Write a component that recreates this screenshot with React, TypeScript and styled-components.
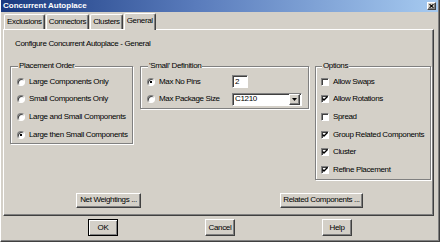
import React from 'react';
import styled, { createGlobalStyle, css } from 'styled-components';

const GlobalStyle = createGlobalStyle`
  html, body { margin: 0; padding: 0; background: #d4d0c8; }
  body { font-family: "Liberation Sans", Arial, sans-serif; font-size: 8px; color: #000; }
  * { box-sizing: border-box; }
`;

const raised = css`
  border: 1px solid;
  border-color: #fff #404040 #404040 #fff;
  box-shadow: inset -1px -1px 0 #808080;
`;

const sunken = css`
  border: 1px solid;
  border-color: #808080 #fff #fff #808080;
  box-shadow: inset 1px 1px 0 #404040;
  background: #fff;
`;

const Dialog = styled.div`
  width: 440px;
  height: 242px;
  background: #d4d0c8;
  border-left: 1px solid #fff;
  border-right: 1px solid #404040;
  border-bottom: 1px solid #404040;
  box-shadow: inset -1px -1px 0 #808080;
  display: flex;
  flex-direction: column;
  letter-spacing: -0.35px;
  line-height: 10px;
`;

const TitleBar = styled.div`
  height: 12px;
  margin-right: 1px;
  display: flex;
  align-items: center;
  padding: 0 2px 0 2px;
  background: linear-gradient(90deg, #1a3a80 0%, #5a7cbc 45%, #a6caf0 100%);
`;

const Title = styled.span`
  flex: 1;
  color: #fff;
  font-weight: bold;
  letter-spacing: 0;
`;

const CloseButton = styled.div`
  ${raised};
  width: 9px;
  height: 8px;
  background: #d4d0c8;
  display: flex;
  align-items: center;
  justify-content: center;
`;

const TabStrip = styled.div`
  height: 16px;
  margin-top: 1px;
  padding-left: 3px;
  display: flex;
  align-items: flex-end;
  gap: 1px;
  position: relative;
  z-index: 1;
`;

const Tab = styled.div<{ $active?: boolean }>`
  height: ${(p) => (p.$active ? '17px' : '15px')};
  margin-bottom: ${(p) => (p.$active ? '-1px' : '0')};
  padding: 0 2px;
  display: flex;
  align-items: center;
  background: #d4d0c8;
  border-top: 1px solid #fff;
  border-left: 1px solid #fff;
  border-right: 1px solid #404040;
  border-radius: 2px 2px 0 0;
  box-shadow: inset -1px 0 0 #808080;
  padding-bottom: ${(p) => (p.$active ? '2px' : '0')};
`;

const Panel = styled.div`
  ${raised};
  margin-left: 2px;
  width: 431px;
  height: 187px;
  padding: 9px 0 0 6px;
  display: flex;
  flex-direction: column;
`;

const Heading = styled.div`
  margin-left: 5px;
  height: 10px;
`;

const GroupsRow = styled.div`
  margin-top: 12px;
  display: flex;
  align-items: flex-start;
`;

const Group = styled.fieldset<{ $width: number; $gapLeft?: number; $padLeft?: number }>`
  width: ${(p) => p.$width}px;
  margin: 0 0 0 ${(p) => p.$gapLeft ?? 0}px;
  padding: 2px 0 0 ${(p) => p.$padLeft ?? 6}px;
  min-width: 0;
  border: 1px solid #808080;
  box-shadow: inset 1px 1px 0 #fff, 1px 1px 0 #fff;
`;

const Legend = styled.legend`
  padding: 0 1px;
  margin-left: 1px;
  height: 10px;
  line-height: 10px;
  background: #d4d0c8;
`;

const Row = styled.div`
  height: 17.6px;
  display: flex;
  align-items: center;
`;

const Choice = styled.label<{ $width?: number }>`
  display: flex;
  align-items: center;
  gap: 4px;
  ${(p) => p.$width && `width: ${p.$width}px;`}
`;

const Radio = styled.span<{ $checked?: boolean }>`
  ${sunken};
  width: 8px;
  height: 8px;
  border-radius: 50%;
  flex: none;
  display: flex;
  align-items: center;
  justify-content: center;
  &::after {
    content: '';
    width: 2px;
    height: 2px;
    background: ${(p) => (p.$checked ? '#000' : 'transparent')};
  }
`;

const Check = styled.span`
  ${sunken};
  width: 8px;
  height: 8px;
  flex: none;
  display: flex;
  align-items: center;
  justify-content: center;
`;

const TextBox = styled.div<{ $width: number }>`
  ${sunken};
  width: ${(p) => p.$width}px;
  height: 13px;
  padding-left: 2px;
  display: flex;
  align-items: center;
`;

const ComboBox = styled(TextBox)`
  padding-right: 1px;
  justify-content: space-between;
`;

const ComboArrow = styled.div`
  ${raised};
  width: 11px;
  height: 11px;
  background: #d4d0c8;
  display: flex;
  align-items: center;
  justify-content: center;
`;

const Button = styled.button<{ $width: number; $default?: boolean }>`
  ${raised};
  width: ${(p) => p.$width}px;
  height: 15px;
  padding: 0;
  background: #d4d0c8;
  font: inherit;
  letter-spacing: inherit;
  color: #000;
  ${(p) =>
    p.$default &&
    css`
      outline: 1px solid #000;
      outline-offset: -1px;
      border-color: #000 #404040 #404040 #000;
      box-shadow: inset 1px 1px 0 #fff, inset -1px -1px 0 #808080;
    `}
`;

const PanelButtons = styled.div`
  margin-top: 13px;
  display: flex;
  padding-left: 66px;
  gap: 139px;
`;

const DialogButtons = styled.div`
  margin-top: 3px;
  padding-left: 87px;
  display: flex;
  gap: 87px;
`;

const BigButton = styled(Button)`
  height: 17px;
`;

const CheckMark = () => (
  <svg width="6" height="6" viewBox="0 0 6 6">
    <path d="M0.5 2.5 L2 4 L5.5 0.5" stroke="#000" strokeWidth="1.4" fill="none" />
  </svg>
);

const placement = [
  { label: 'Large Components Only', checked: false },
  { label: 'Small Components Only', checked: false },
  { label: 'Large and Small Components', checked: false },
  { label: 'Large then Small Components', checked: true },
];

const options = [
  { label: 'Allow Swaps', checked: false },
  { label: 'Allow Rotations', checked: true },
  { label: 'Spread', checked: false },
  { label: 'Group Related Components', checked: true },
  { label: 'Cluster', checked: true },
  { label: 'Refine Placement', checked: true },
];

export default function App() {
  return (
    <>
      <GlobalStyle />
      <Dialog>
        <TitleBar>
          <Title>Concurrent Autoplace</Title>
          <CloseButton>
            <svg width="5" height="4" viewBox="0 0 5 4">
              <path d="M0.5 0.2 L4.5 3.8 M4.5 0.2 L0.5 3.8" stroke="#000" strokeWidth="1.1" />
            </svg>
          </CloseButton>
        </TitleBar>

        <TabStrip>
          <Tab>Exclusions</Tab>
          <Tab>Connectors</Tab>
          <Tab>Clusters</Tab>
          <Tab $active>General</Tab>
        </TabStrip>

        <Panel>
          <Heading>Configure Concurrent Autoplace - General</Heading>

          <GroupsRow>
            <Group $width={123}>
              <Legend>Placement Order</Legend>
              {placement.map((p) => (
                <Row key={p.label}>
                  <Choice>
                    <Radio $checked={p.checked} />
                    {p.label}
                  </Choice>
                </Row>
              ))}
            </Group>

            <Group $width={169} $gapLeft={7}>
              <Legend>'Small' Definition</Legend>
              <Row>
                <Choice $width={85}>
                  <Radio $checked />
                  Max No Pins
                </Choice>
                <TextBox $width={16}>2</TextBox>
              </Row>
              <Row>
                <Choice $width={85}>
                  <Radio />
                  Max Package Size
                </Choice>
                <ComboBox $width={70}>
                  C1210
                  <ComboArrow>
                    <svg width="5" height="3" viewBox="0 0 5 3">
                      <path d="M0 0 H5 L2.5 3 Z" fill="#000" />
                    </svg>
                  </ComboArrow>
                </ComboBox>
              </Row>
            </Group>

            <Group $width={116} $gapLeft={6} $padLeft={5}>
              <Legend>Options</Legend>
              {options.map((o) => (
                <Row key={o.label}>
                  <Choice>
                    <Check>{o.checked && <CheckMark />}</Check>
                    {o.label}
                  </Choice>
                </Row>
              ))}
            </Group>
          </GroupsRow>

          <PanelButtons>
            <Button $width={65}>Net Weightings ...</Button>
            <Button $width={83}>Related Components ...</Button>
          </PanelButtons>
        </Panel>

        <DialogButtons>
          <BigButton $width={30} $default>OK</BigButton>
          <BigButton $width={30}>Cancel</BigButton>
          <BigButton $width={30}>Help</BigButton>
        </DialogButtons>
      </Dialog>
    </>
  );
}
